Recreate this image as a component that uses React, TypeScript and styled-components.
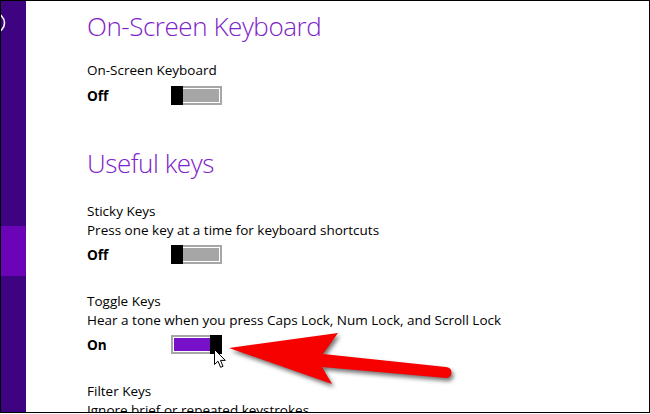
import React from "react";
import styled, { createGlobalStyle } from "styled-components";

const Global = createGlobalStyle`
  html, body { margin: 0; padding: 0; background: #fff; overflow: hidden; }
  * { box-sizing: border-box; }
`;

const Frame = styled.div`
  width: 650px;
  height: 413px;
  border: 1px solid #000;
  display: flex;
  overflow: hidden;
  background: #fff;
`;

const Sidebar = styled.nav`
  position: relative;
  width: 25px;
  flex: none;
  background: #3e0380;
  display: flex;
  flex-direction: column;
  overflow: hidden;
`;

const SideSpacer = styled.div<{ $h: number }>`
  height: ${(p) => p.$h}px;
  flex: none;
`;

const SideActive = styled.div`
  height: 50px;
  flex: none;
  background: #6a04b6;
`;

const BackRing = styled.svg`
  position: absolute;
  left: 0;
  top: 11px;
`;

const Content = styled.main`
  position: relative;
  flex: 1;
  padding-left: 61px;
  display: flex;
  flex-direction: column;
  overflow: hidden;
  font-family: "Open Sans", "Noto Sans", sans-serif;
  color: #000;
`;

const Heading = styled.h2<{ $top: number }>`
  margin: ${(p) => p.$top}px 0 0;
  font-size: 26px;
  letter-spacing: -0.45px;
  line-height: 36px;
  font-weight: 300;
  color: #7e22c9;
  white-space: nowrap;
`;

const Setting = styled.div<{ $top: number }>`
  margin-top: ${(p) => p.$top}px;
  display: flex;
  flex-direction: column;
`;

const Line = styled.div`
  font-size: 13.5px;
  line-height: 19px;
  white-space: nowrap;
`;

const ToggleRow = styled.div<{ $top: number }>`
  margin-top: ${(p) => p.$top}px;
  display: flex;
  align-items: flex-start;
`;

const State = styled.span`
  width: 84px;
  font-size: 13.6px;
  line-height: 19px;
  font-weight: 700;
`;

const Switch = styled.div<{ $on: boolean }>`
  width: 51px;
  height: 19px;
  display: flex;
  flex-direction: ${(p) => (p.$on ? "row" : "row-reverse")};
`;

const Track = styled.div<{ $on: boolean }>`
  flex: 1;
  border: 2px solid #a6a6a6;
  ${(p) => (p.$on ? "border-right: none;" : "border-left: none;")}
  padding: 1px;
  ${(p) => (p.$on ? "padding-right: 0;" : "padding-left: 0;")}
  background: #fff;
  display: flex;
`;

const Fill = styled.div<{ $on: boolean }>`
  flex: 1;
  background: ${(p) => (p.$on ? "#7710c9" : "#a6a6a6")};
`;

const Thumb = styled.div`
  width: 12px;
  background: #000;
`;

const Cursor = styled.svg`
  position: absolute;
  left: 188px;
  top: 348px;
`;

const Arrow = styled.svg`
  position: absolute;
  left: 199px;
  top: 324px;
  overflow: visible;
  filter: drop-shadow(2px 3px 2px rgba(0, 0, 0, 0.55));
`;

function Toggle({ on }: { on: boolean }) {
  return (
    <Switch $on={on}>
      <Track $on={on}>
        <Fill $on={on} />
      </Track>
      <Thumb />
    </Switch>
  );
}

// arrow outline in page coordinates, translated into the svg's local space
const OX = 225;
const OY = 325;
const pt = (x: number, y: number) => `${x - OX},${y - OY}`;
const arrowPath = `M${pt(229, 348)} L${pt(338, 333)} L${pt(323, 354)} L${pt(446, 367)} A5.5,5.5 0 0 1 ${pt(446, 378)} L${pt(322, 367)} L${pt(332, 384)} Z`;

export default function App() {
  return (
    <>
      <Global />
      <Frame>
        <Sidebar>
          <BackRing width="6" height="22" viewBox="0 0 6 22">
            <circle cx="-6" cy="11" r="9.5" fill="none" stroke="#fff" strokeWidth="1.6" />
          </BackRing>
          <SideSpacer $h={225} />
          <SideActive />
        </Sidebar>
        <Content>
          <Heading $top={7}>On-Screen Keyboard</Heading>
          <Setting $top={17}>
            <Line>On-Screen Keyboard</Line>
            <ToggleRow $top={6}>
              <State>Off</State>
              <Toggle on={false} />
            </ToggleRow>
          </Setting>
          <Heading $top={40}>Useful keys</Heading>
          <Setting $top={21}>
            <Line>Sticky Keys</Line>
            <Line>Press one key at a time for keyboard shortcuts</Line>
            <ToggleRow $top={5}>
              <State>Off</State>
              <Toggle on={false} />
            </ToggleRow>
          </Setting>
          <Setting $top={28}>
            <Line>Toggle Keys</Line>
            <Line>Hear a tone when you press Caps Lock, Num Lock, and Scroll Lock</Line>
            <ToggleRow $top={5}>
              <State>On</State>
              <Toggle on={true} />
            </ToggleRow>
          </Setting>
          <Setting $top={28}>
            <Line>Filter Keys</Line>
            <Line>Ignore brief or repeated keystrokes</Line>
          </Setting>
          <Cursor width="13" height="20" viewBox="0 0 13 20">
            <path
              d="M0.5 0.5 L0.5 15.5 L4 12.2 L6.6 18.3 L9 17.3 L6.5 11.4 L11.3 11.4 Z"
              fill="#fff"
              stroke="#000"
              strokeWidth="1"
              strokeLinejoin="miter"
            />
          </Cursor>
          <Arrow width="240" height="70" viewBox="0 0 240 70">
            <path d={arrowPath} fill="#f70000" />
          </Arrow>
        </Content>
      </Frame>
    </>
  );
}
